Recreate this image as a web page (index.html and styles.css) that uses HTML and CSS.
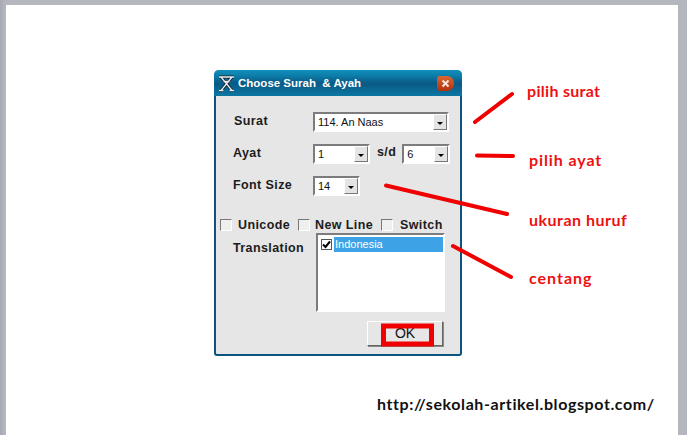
FILE: index.html
```html
<!DOCTYPE html>
<html lang="en">
<head>
    <meta charset="UTF-8">
    <meta name="viewport" content="width=device-width, initial-scale=1.0">
    <title>Choose Surah & Ayah</title>
    <link rel="stylesheet" href="styles.css">
</head>
<body>
    <div class="sheet">
        <div class="dialog">
            <div class="titlebar">
                <svg class="app-icon" width="17" height="17" viewBox="0 0 17 17">
                    <path d="M1 2h15M3 2l11 13.500M14 2L3 15.500M1 15.500h4.500M11.500 15.500H16M5.500 6.500h6" fill="none" stroke="#10222e" stroke-width="3"/>
                    <path d="M1 2h15M3 2l11 13.500M14 2L3 15.500M1 15.500h4.500M11.500 15.500H16M5.500 6.500h6" fill="none" stroke="#e8eef2" stroke-width="1.300"/>
                </svg>
                <span class="title">Choose Surah &nbsp;&amp; Ayah</span>
                <div class="close-btn">
                    <svg width="9" height="9" viewBox="0 0 9 9"><path d="M1.500 1.500l6 6M7.500 1.500l-6 6" stroke="#f6e6df" stroke-width="2"/></svg>
                </div>
            </div>
            <div class="dialog-body">
                <div class="row row-surat">
                    <span class="label label-first">Surat</span>
                    <div class="combo combo-surat">114. An Naas<span class="arrow"></span></div>
                </div>
                <div class="row">
                    <span class="label">Ayat</span>
                    <div class="combo combo-ayat">1<span class="arrow"></span></div>
                    <span class="label sd">s/d</span>
                    <div class="combo combo-to">6<span class="arrow"></span></div>
                </div>
                <div class="row">
                    <span class="label">Font Size</span>
                    <div class="combo combo-size">14<span class="arrow"></span></div>
                </div>
                <div class="checks">
                    <span class="box"></span><span class="label check-unicode">Unicode</span>
                    <span class="box"></span><span class="label check-newline">New Line</span>
                    <span class="box"></span><span class="label check-switch">Switch</span>
                </div>
                <div class="translation">
                    <span class="label">Translation</span>
                    <div class="list">
                        <div class="list-item">
                            <span class="item-check">
                                <svg width="9" height="9" viewBox="0 0 9 9"><path d="M1 4.500l2.500 2.500L8 1.500" fill="none" stroke="#000" stroke-width="2"/></svg>
                            </span>
                            <span class="item-text">Indonesia</span>
                        </div>
                    </div>
                </div>
                <div class="actions">
                    <div class="ok-btn">OK</div>
                </div>
            </div>
        </div>
        <div class="url">http://sekolah-artikel.blogspot.com/</div>
    </div>

    <svg class="marks" width="687" height="435" viewBox="0 0 687 435">
        <path d="M512 94L475 122M477 155.500L513 156M386 185.500L507 214M453 246L511 277" fill="none" stroke="#f00000" stroke-width="4" stroke-linecap="round"/>
        <rect x="383.500" y="326" width="48" height="18" fill="none" stroke="#f00000" stroke-width="5"/>
    </svg>
    <span class="note note-surat">pilih surat</span>
    <span class="note note-ayat">pilih ayat</span>
    <span class="note note-huruf">ukuran huruf</span>
    <span class="note note-centang">centang</span>
</body>
</html>
```

FILE: styles.css
```css
html, body {
    margin: 0;
    height: 435px;
    overflow: hidden;
}
body {
    position: relative;
    background: linear-gradient(to right, #a6a9b1, #b4b7be 5px);
    font-family: "Liberation Sans", Arial, sans-serif;
}
.sheet {
    margin-left: 6px;
    width: 672px;
    height: 430px;
    padding-top: 5px;
    background: #fff;
    background-clip: content-box;
    display: flex;
    flex-direction: column;
}
.dialog {
    width: 248px;
    height: 286px;
    margin: 65px 0 0 208px;
    box-sizing: border-box;
    border: 2px solid #0b5480;
    border-top: 0;
    border-radius: 5px 5px 3px 3px;
    background: #e6e6e6;
    display: flex;
    flex-direction: column;
}
.titlebar {
    height: 26px;
    margin: 0 -2px;
    padding: 0 8px 0 4px;
    display: flex;
    align-items: center;
    border-radius: 5px 5px 0 0;
    background: linear-gradient(to bottom, #1190bd 0, #0d7fab 5px, #0b5f8b 12px, #0a5a86 14px, #0c77a3 26px);
}
.app-icon {
    margin-right: 3px;
}
.title {
    flex: 1;
    color: #fff;
    font-size: 11.500px;
    font-weight: bold;
}
.close-btn {
    width: 17px;
    height: 15px;
    border-radius: 3px 7px 7px 3px;
    background: linear-gradient(to bottom, #d9672f, #b3300f);
    display: flex;
    align-items: center;
    justify-content: center;
}
.dialog-body {
    padding: 16px 0 0 17px;
    display: flex;
    flex-direction: column;
}
.row {
    height: 20px;
    margin-bottom: 12px;
    display: flex;
    align-items: center;
}
.label {
    color: #1c1c1c;
    font-size: 12.500px;
    font-weight: bold;
    letter-spacing: 0.4px;
}
.row .label {
    margin-top: -3px;
}
.row .label:first-child {
    width: 80px;
}
.row .label-first {
    margin-left: 1px;
    margin-right: -1px;
}
.row .sd {
    margin: -4px 6px 0 7px;
}
.combo {
    box-sizing: border-box;
    height: 20px;
    padding: 1px 0 0 3px;
    border: 2px solid;
    border-color: #7c7c7c #fff #fff #7c7c7c;
    background: #fff;
    color: #111;
    font-size: 11px;
    line-height: 15px;
    position: relative;
}
.combo-surat {
    width: 136px;
}
.combo-ayat {
    width: 57px;
}
.combo-to {
    width: 48px;
}
.combo-size {
    width: 47px;
}
.arrow {
    position: absolute;
    right: 0;
    top: 0;
    width: 14px;
    height: 16px;
    box-sizing: border-box;
    background: #e4e4e4;
    border: 1px solid;
    border-color: #fff #777 #777 #fff;
}
.arrow::after {
    content: "";
    position: absolute;
    left: 3px;
    top: 7px;
    border: 3px solid transparent;
    border-top: 3px solid #000;
    border-bottom: 0;
}
.checks {
    height: 16px;
    margin: 9px 0 0 -13px;
    display: flex;
    align-items: center;
}
.box {
    width: 12px;
    height: 12px;
    box-sizing: border-box;
    border: 1px solid;
    border-color: #777 #fff #fff #777;
    background: #efefef;
}
.check-unicode {
    margin: 0 6px;
    width: 54px;
}
.check-newline {
    margin: 0 6px 0 5px;
    width: 60px;
}
.check-switch {
    margin-left: 7px;
}
.translation {
    display: flex;
}
.translation .label {
    width: 83px;
    margin-top: 8px;
}
.list {
    width: 129px;
    height: 79px;
    box-sizing: border-box;
    padding: 2px 0 0 3px;
    border: 2px solid;
    border-color: #7c7c7c #fff #fff #7c7c7c;
    background: #fff;
}
.list-item {
    display: flex;
    align-items: center;
    height: 15px;
}
.item-check {
    width: 11px;
    height: 11px;
    box-sizing: border-box;
    border: 1px solid #555;
    margin-right: 2px;
    display: flex;
    align-items: center;
    justify-content: center;
}
.item-text {
    flex: 1;
    padding-left: 1px;
    height: 15px;
    line-height: 14px;
    background: #3ea3e6;
    color: #fff;
    font-size: 11px;
}
.actions {
    margin-top: 9px;
    padding-left: 134px;
}
.ok-btn {
    width: 76px;
    height: 25px;
    box-sizing: border-box;
    border: 1px solid;
    border-color: #fff #666 #666 #fff;
    box-shadow: 1px 1px 0 #888;
    background: #e6e6e6;
    color: #111;
    font-size: 14px;
    line-height: 22px;
    text-align: center;
}
.url {
    margin: 38px 0 0 371px;
    color: #111;
    font-family: "Lato", sans-serif;
    font-weight: bold;
    font-size: 16px;
    letter-spacing: 0.6px;
    white-space: nowrap;
}
.marks {
    position: absolute;
    left: 0;
    top: 0;
}
.note {
    position: absolute;
    color: #ee1010;
    font-family: "Lato", sans-serif;
    font-weight: bold;
    font-size: 16px;
    letter-spacing: 0.3px;
    line-height: 20px;
    white-space: nowrap;
}
.note-surat {
    left: 527px;
    top: 81px;
}
.note-ayat {
    left: 529px;
    top: 150px;
    letter-spacing: 0.9px;
}
.note-huruf {
    left: 529px;
    top: 210px;
    letter-spacing: 0.5px;
}
.note-centang {
    left: 529px;
    top: 268px;
    letter-spacing: 1px;
}
```
